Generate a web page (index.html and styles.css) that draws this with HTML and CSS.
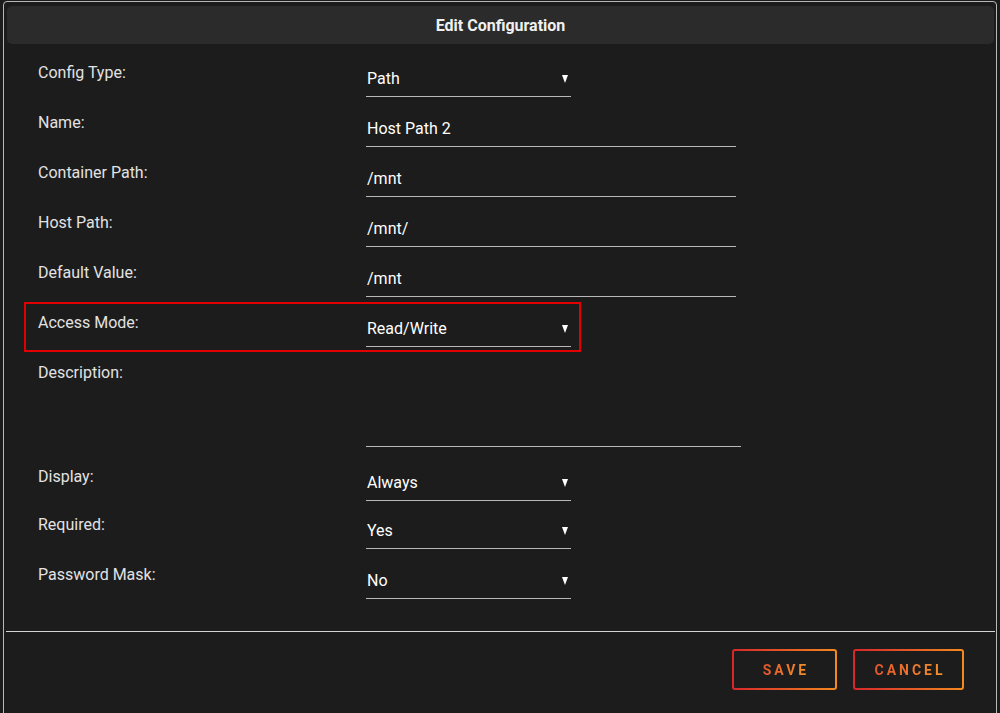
FILE: index.html
```html
<!DOCTYPE html>
<html>
<head>
<meta charset="utf-8">
<link rel="stylesheet" href="styles.css">
</head>
<body>
<div class="dialog">
  <div class="header">Edit Configuration</div>
  <div class="form">
    <div class="row">
      <div class="label">Config Type:</div>
      <div class="field select"><span class="value">Path</span><span class="caret"></span></div>
    </div>
    <div class="row">
      <div class="label">Name:</div>
      <div class="field text"><span class="value">Host Path 2</span></div>
    </div>
    <div class="row">
      <div class="label">Container Path:</div>
      <div class="field text"><span class="value">/mnt</span></div>
    </div>
    <div class="row">
      <div class="label">Host Path:</div>
      <div class="field text"><span class="value">/mnt/</span></div>
    </div>
    <div class="row">
      <div class="label">Default Value:</div>
      <div class="field text"><span class="value">/mnt</span></div>
    </div>
    <div class="row highlighted">
      <div class="label">Access Mode:</div>
      <div class="field select"><span class="value">Read/Write</span><span class="caret"></span></div>
      <div class="redbox"></div>
    </div>
    <div class="row desc-row">
      <div class="label">Description:</div>
      <div class="field textarea"></div>
    </div>
    <div class="row short">
      <div class="label">Display:</div>
      <div class="field select"><span class="value">Always</span><span class="caret"></span></div>
    </div>
    <div class="row">
      <div class="label">Required:</div>
      <div class="field select"><span class="value">Yes</span><span class="caret"></span></div>
    </div>
    <div class="row">
      <div class="label">Password Mask:</div>
      <div class="field select"><span class="value">No</span><span class="caret"></span></div>
    </div>
  </div>
  <div class="separator"></div>
  <div class="actions">
    <button class="btn"><span class="btn-text">SAVE</span></button>
    <button class="btn cancel"><span class="btn-text">CANCEL</span></button>
  </div>
</div>
</body>
</html>
```
FILE: styles.css
```css
html, body {
  margin: 0;
  padding: 0;
  background: #1c1c1c;
  height: 713px;
  overflow: hidden;
  font-family: Roboto, "Liberation Sans", Arial, sans-serif;
}

.dialog {
  margin: 1px 3px 0 3px;
  height: 740px;
  border: 1px solid #b8b8b8;
  border-radius: 4px;
  background: #1c1c1c;
  box-sizing: border-box;
}

.header {
  margin: 4px 2px 0 3px;
  height: 38px;
  background: #2b2b2b;
  border-radius: 5px;
  display: flex;
  align-items: center;
  justify-content: center;
  color: #f0f0f0;
  font-weight: bold;
  font-size: 16px;
}

.form {
  padding: 19px 0 16px 34px;
}

.row {
  display: flex;
  align-items: flex-start;
  height: 50px;
  position: relative;
}

.row.short {
  height: 48px;
}

.desc-row {
  height: 104px;
}

.label {
  width: 328px;
  flex: none;
  color: #e2e2e2;
  font-size: 16px;
  line-height: 20px;
}

.field {
  box-sizing: border-box;
  height: 34px;
  padding: 6px 0 7px 1px;
  border-bottom: 1px solid #b9b9b9;
  display: flex;
  align-items: center;
  justify-content: space-between;
}

.field.select {
  width: 205px;
}

.field.text {
  width: 370px;
}

.field.textarea {
  width: 375px;
  height: 84px;
}

.value {
  color: #ffffff;
  font-size: 16px;
  line-height: 20px;
}

.caret {
  width: 0;
  height: 0;
  border-left: 3.5px solid transparent;
  border-right: 3.5px solid transparent;
  border-top: 8px solid #ffffff;
  margin-right: 3px;
}

.redbox {
  position: absolute;
  left: -14px;
  top: -11px;
  width: 557px;
  height: 50px;
  border: 2px solid #e10000;
  box-sizing: border-box;
}

.separator {
  margin: 0 1px 0 2px;
  height: 1px;
  background: #d4d4d4;
}

.actions {
  display: flex;
  justify-content: flex-end;
  gap: 16px;
  padding: 17px 32px 0 0;
}

.btn {
  height: 41px;
  width: 105px;
  border: 2px solid transparent;
  border-radius: 3px;
  background:
    linear-gradient(#1c1c1c, #1c1c1c) padding-box,
    linear-gradient(90deg, #d8262b, #f38a1f) border-box;
  font-family: Roboto, "Liberation Sans", Arial, sans-serif;
  font-weight: bold;
  font-size: 14px;
  letter-spacing: 3px;
  padding: 0 0 0 3px;
  cursor: pointer;
}

.btn.cancel {
  width: 111px;
}

.btn-text {
  background: linear-gradient(90deg, #e5562b, #f3942a);
  -webkit-background-clip: text;
  background-clip: text;
  color: transparent;
}
```
